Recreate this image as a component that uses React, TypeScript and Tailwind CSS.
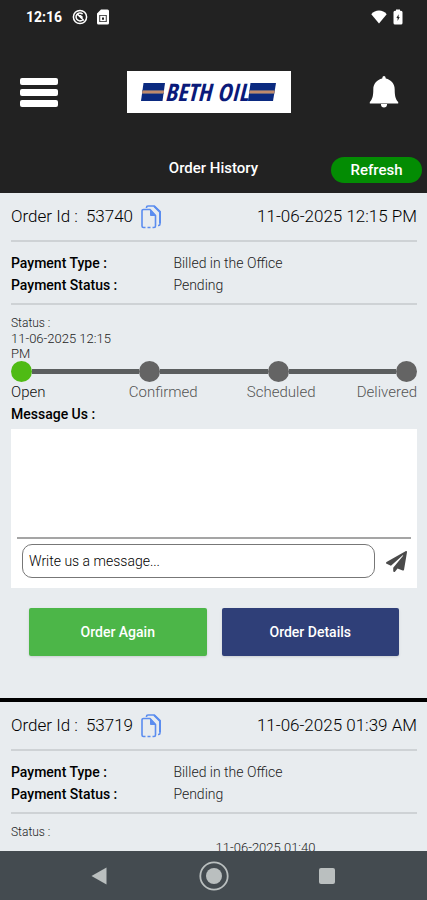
import React, { useState } from 'react';
import { FaPaperPlane } from 'react-icons/fa';

type Order = {
  id: string;
  date: string;
  paymentType: string;
  paymentStatus: string;
  activeStep: number;
  stepDate: string;
};

const orders: Order[] = [
  { id: '53740', date: '11-06-2025 12:15 PM', paymentType: 'Billed in the Office', paymentStatus: 'Pending', activeStep: 0, stepDate: '11-06-2025 12:15 PM' },
  { id: '53719', date: '11-06-2025 01:39 AM', paymentType: 'Billed in the Office', paymentStatus: 'Pending', activeStep: 2, stepDate: '11-06-2025 01:40 AM' },
];

const steps = [
  { label: 'Open', align: 'text-left' },
  { label: 'Confirmed', align: 'text-center' },
  { label: 'Scheduled', align: 'text-right' },
  { label: 'Delivered', align: 'text-right' },
];

function StatusBar() {
  return (
    <div className="flex h-[34px] items-center justify-between px-6">
      <div className="flex items-center gap-2 pl-0.5">
        <span className="text-sm font-bold">12:16</span>
        <svg viewBox="0 0 16 16" className="ml-0.5 h-4 w-4" fill="none" stroke="currentColor" strokeWidth="1.5">
          <circle cx="8" cy="8" r="6.6" />
          <path d="M11.4 9.8A3.9 3.9 0 1 1 10.6 5.1M5 4.6l6.8 6.9M8 6.2l2.6 2.4" />
        </svg>
        <svg viewBox="0 0 14 16" className="h-4 w-3.5" fill="currentColor">
          <path fillRule="evenodd" d="M5 .5h6.500a1.500 1.500 0 0 1 1.500 1.500v12a1.500 1.500 0 0 1-1.500 1.500h-9A1.500 1.500 0 0 1 1 14V4.500zM3.300 6v7h7.400V6z" />
          <path d="M4.200 6.800h5.600v5.400H4.200zM6 8.400v2.400h2V8.400z" fillRule="evenodd" />
        </svg>
      </div>
      <div className="flex items-center gap-1.5">
        <svg viewBox="0 0 16 14" className="h-3.5 w-4" fill="currentColor">
          <path d="M8 13.500.3 4.200C2.300 1.800 5 .6 8 .6s5.700 1.200 7.700 3.600z" />
        </svg>
        <svg viewBox="0 0 10 16" className="h-4 w-2.5" fill="currentColor">
          <path fillRule="evenodd" d="M3 .5h4v1.300h1a1.500 1.500 0 0 1 1.500 1.500V14A1.500 1.500 0 0 1 8 15.500H2A1.500 1.500 0 0 1 .5 14V3.300A1.500 1.500 0 0 1 2 1.800h1zM5.600 5.200 3.400 9h1.200v3l2.100-3.900H5.600z" />
        </svg>
      </div>
    </div>
  );
}

function Logo() {
  return (
    <div className="flex h-[42px] w-[164px] items-center justify-center bg-white">
      <svg viewBox="0 0 24 18" className="h-[18px] w-6 shrink-0">
        <path d="M2.500 0H24l-2.500 18H0z" fill="#0b2a80" />
        <path d="M1.600 7h21.500l-.6 4H1z" fill="#6f6678" />
        <path d="M1.500 8h21.500l-.3 2H1.200z" fill="#c08a6c" />
      </svg>
      <span className="text-2xl font-extrabold whitespace-nowrap text-[#0a1a7a] italic [font-family:'Open_Sans_Condensed','Liberation_Sans_Narrow',Roboto,sans-serif]">BETH OIL</span>
      <svg viewBox="0 0 28 18" className="h-[18px] w-7 shrink-0">
        <path d="M2.500 0H28l-3 18H0z" fill="#0b2a80" />
        <path d="M1.600 7h25.200l-.7 4H1z" fill="#6f6678" />
        <path d="M1.500 8h25.200l-.4 2H1.200z" fill="#c08a6c" />
      </svg>
    </div>
  );
}

function Header() {
  return (
    <header className="bg-[#222222] text-white">
      <StatusBar />
      <div className="flex items-center justify-between px-5 pt-[37px]">
        <button type="button" aria-label="Menu" className="flex w-[38px] flex-col gap-1">
          <span className="h-[7px] w-full rounded-xs bg-white" />
          <span className="h-[7px] w-full rounded-xs bg-white" />
          <span className="h-[7px] w-full rounded-xs bg-white" />
        </button>
        <Logo />
        <button type="button" aria-label="Notifications" className="flex w-12 justify-end pr-2">
          <svg viewBox="0 0 30 34" className="h-[34px] w-[30px]" fill="currentColor">
            <path d="M15 1c1 0 1.500.8 1.800 2.500 5.200 1.200 8.900 5 8.900 10.900 0 6 .7 9.600 3.500 12.500v1.600H.8v-1.600c2.800-2.900 3.500-6.500 3.500-12.500 0-5.900 3.700-9.700 8.900-10.900C13.500 1.800 14 1 15 1z" />
            <path d="M11.900 29h6.200c0 2.300-1.300 3.600-3.100 3.600s-3.100-1.300-3.100-3.600z" />
          </svg>
        </button>
      </div>
      <div className="grid grid-cols-3 items-center px-[5px] pt-11 pb-[10px]">
        <h1 className="col-start-2 pb-1 text-center text-[15px] leading-5 font-medium">Order History</h1>
        <button type="button" className="h-[26px] w-[91px] justify-self-end rounded-full bg-[#038c03] text-[15px] font-medium">Refresh</button>
      </div>
    </header>
  );
}

function CopyIcon() {
  return (
    <svg viewBox="0 0 20 24" className="h-6 w-5" fill="none" stroke="#5b8def" strokeWidth="1.600" strokeLinejoin="round">
      <path d="M5.500 3V2.500A1.500 1.500 0 0 1 7 1h6L19 6.500V19a1.500 1.500 0 0 1-1.500 1.500H17" />
      <path d="M13 1l6 6v11" strokeWidth="2" />
      <path d="M4.500 22.500H2.500A1.500 1.500 0 0 1 1 21V6A1.500 1.500 0 0 1 2.500 4.500H9l5.500 6V21a1.500 1.500 0 0 1-1.500 1.500h-1.500M6.500 22.500h3" />
      <path d="M9.500 5l5 5.500h-5z" fill="#5b8def" strokeWidth="1" />
    </svg>
  );
}

function StatusTrack({ order }: { order: Order }) {
  return (
    <div>
      <div className="grid grid-cols-4 text-[13px] leading-[15px] font-light text-[#222]">
        {steps.map((step, i) => (
          <p key={step.label} className={`h-[30px] ${step.align}`}>
            {i === order.activeStep ? order.stepDate : ''}
          </p>
        ))}
      </div>
      <div className="flex items-center">
        {steps.map((step, i) => (
          <React.Fragment key={step.label}>
            {i > 0 && <span className="h-[5px] flex-1 bg-[#5b5e5f]" />}
            <span className={`size-[21px] rounded-full ${i <= order.activeStep ? 'bg-[#4fbb14]' : 'bg-[#646464]'}`} />
          </React.Fragment>
        ))}
      </div>
      <div className="grid grid-cols-4 text-[15px] leading-[21px] font-light">
        {steps.map((step, i) => (
          <span key={step.label} className={`${step.align} ${i <= order.activeStep ? 'text-[#111]' : 'text-[#555]'}`}>
            {step.label}
          </span>
        ))}
      </div>
    </div>
  );
}

function MessageBox({ orderId }: { orderId: string }) {
  const [message, setMessage] = useState('');

  return (
    <div>
      <label htmlFor={`message-${orderId}`} className="block text-sm leading-[22px] font-medium text-black">
        Message Us :
      </label>
      <div className="mt-1 bg-white px-[6px] pb-[10px]">
        <div className="h-[110px] border-b-2 border-[#a5a5a5]" />
        <div className="flex items-center gap-[11px] pt-[5px] pr-1 pl-[5px]">
          <input
            type="text"
            id={`message-${orderId}`}
            placeholder="Write us a message..."
            value={message}
            onChange={(e) => setMessage(e.target.value)}
            className="h-[34px] min-w-0 flex-1 rounded-[10px] border border-[#777] px-[6px] text-sm font-light text-black placeholder:text-black"
          />
          <button type="button" aria-label="Send message">
            <FaPaperPlane className="size-[21px] text-[#4a4a4a]" />
          </button>
        </div>
      </div>
    </div>
  );
}

function OrderCard({ order }: { order: Order }) {
  return (
    <article className="border-b-4 border-black pr-[10px] pb-[42px] pl-[11px]">
      <div className="flex h-[49px] items-center justify-between border-b-2 border-[#ced2d5] text-[17px] font-light text-black">
        <div className="flex items-center">
          <span className="mr-2">Order Id :</span>
          <span className="mr-2">{order.id}</span>
          <button type="button" aria-label="Copy order id">
            <CopyIcon />
          </button>
        </div>
        <span>{order.date}</span>
      </div>
      <dl className="grid grid-cols-[2fr_3fr] border-b-2 border-[#ced2d5] pt-[10px] pb-[7px] text-sm leading-[22px]">
        <dt className="font-medium text-black">Payment Type :</dt>
        <dd className="font-light text-[#222]">{order.paymentType}</dd>
        <dt className="font-medium text-black">Payment Status :</dt>
        <dd className="font-light text-[#222]">{order.paymentStatus}</dd>
      </dl>
      <p className="pt-[10px] text-xs leading-4 font-light text-[#222]">Status :</p>
      <StatusTrack order={order} />
      <MessageBox orderId={order.id} />
      <div className="flex gap-[15px] px-[18px] pt-5">
        <button type="button" className="h-12 flex-1 rounded-xs bg-[#4cb648] text-sm font-medium text-white shadow">
          Order Again
        </button>
        <button type="button" className="h-12 flex-1 rounded-xs bg-[#2f3f78] text-sm font-medium text-white shadow">
          Order Details
        </button>
      </div>
    </article>
  );
}

function SystemNav() {
  return (
    <nav className="flex h-[49px] shrink-0 items-center justify-between bg-[#444b50] px-[90px] text-[#babfbf]">
      <button type="button" aria-label="Back">
        <svg viewBox="0 0 18 20" className="h-5 w-[18px]" fill="currentColor">
          <path d="M16.500 1.500v17L1.500 10z" />
        </svg>
      </button>
      <button type="button" aria-label="Home">
        <svg viewBox="0 0 30 30" className="size-[30px]" fill="currentColor">
          <circle cx="15" cy="15" r="13.700" fill="none" stroke="currentColor" strokeWidth="1.800" />
          <circle cx="15" cy="15" r="8" />
        </svg>
      </button>
      <button type="button" aria-label="Recent apps" className="flex w-[18px]">
        <span className="size-4 rounded-xs bg-current" />
      </button>
    </nav>
  );
}

export default function App() {
  return (
    <div className="flex h-screen flex-col bg-[#e8ecef] [font-family:Roboto,sans-serif]">
      <Header />
      <main className="min-h-0 flex-1 overflow-y-auto [scrollbar-width:none]">
        {orders.map((order) => (
          <OrderCard key={order.id} order={order} />
        ))}
      </main>
      <SystemNav />
    </div>
  );
}
